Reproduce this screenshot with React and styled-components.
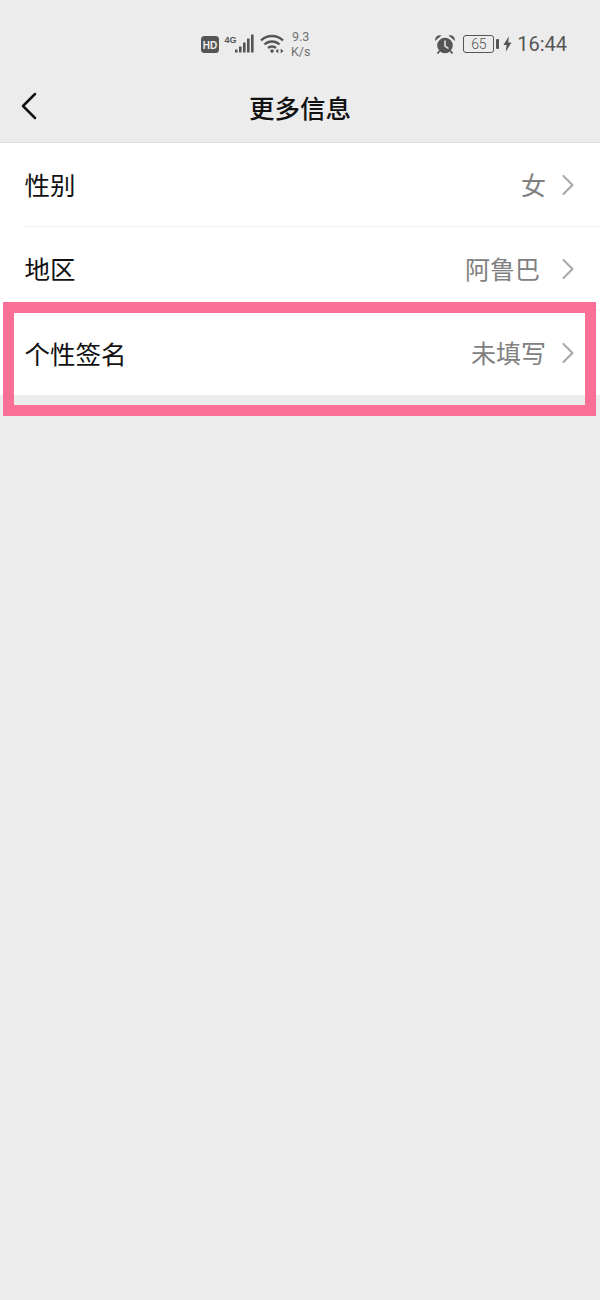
import React from "react";
import styled, { createGlobalStyle } from "styled-components";
import { ChevronLeft, ChevronRight } from "lucide-react";

const Global = createGlobalStyle`
  html, body {
    margin: 0;
    padding: 0;
    background: #ececec;
  }
  * {
    box-sizing: border-box;
  }
`
const Page = styled.div`
  position: relative;
  width: 600px;
  height: 1300px;
  background: #ececec;
  font-family: "Noto Sans CJK SC", "Liberation Sans", sans-serif;
  overflow: hidden;
`
const StatusBar = styled.div`
  display: flex;
  justify-content: space-between;
  align-items: center;
  height: 72px;
  padding: 16px 33px 0 201px;
  color: #555;
  font-family: "Roboto", "Liberation Sans", sans-serif;
`
const StatusGroup = styled.div`
  display: flex;
  align-items: center;
`
const Speed = styled.div`
  font-size: 12.5px;
  line-height: 15px;
  text-align: center;
  margin-left: 7px;
  color: #707070;
`
const BatteryBox = styled.div`
  display: flex;
  align-items: center;
  justify-content: center;
  width: 31px;
  height: 18px;
  margin-left: 8px;
  border: 1.5px solid #555;
  border-radius: 3px;
  font-size: 14px;
  font-weight: 300;
  letter-spacing: -0.4px;
`
const BatteryCap = styled.div`
  width: 3px;
  height: 10px;
  margin-left: 2px;
  background: #555;
  border-radius: 1px;
`
const Time = styled.div`
  font-size: 20px;
  font-weight: 400;
  color: #555;
  margin-left: 5px;
`
const Header = styled.div`
  position: relative;
  display: flex;
  align-items: center;
  justify-content: center;
  height: 71px;
  padding-bottom: 2px;
  border-bottom: 1px solid #e0e0e0;
`
const BackBtn = styled.div`
  position: absolute;
  left: 5px;
  top: 10px;
  display: flex;
  color: #111;
`
const Title = styled.div`
  font-size: 25.5px;
  font-weight: 500;
  color: #111;
`
const List = styled.div`
  background: #fff;
`
const Row = styled.div`
  display: flex;
  align-items: center;
  justify-content: space-between;
  height: 84px;
  margin-left: 24.5px;
  padding: 0 14px 2px 0;
  border-bottom: ${(p) => (p.$last ? "none" : "1px solid #f0f0f0")};
`
const Label = styled.div`
  font-size: 25.5px;
  color: #111;
`
const Value = styled.div`
  display: flex;
  align-items: center;
  font-size: 25px;
  color: #808080;
`
const Arrow = styled.div`
  display: flex;
  margin: 2px 0 0 ${(p) => p.$gap}px;
  color: #a8a8a8;
`
const Highlight = styled.div`
  position: absolute;
  left: 3px;
  top: 302px;
  width: 593px;
  height: 114px;
  border: 11px solid #fa6f95;
`

const rows = [
  { label: "性别", value: "女", gap: 4 },
  { label: "地区", value: "阿鲁巴", gap: 10 },
  { label: "个性签名", value: "未填写", gap: 4, last: true },
];

const HdIcon = () => (
  <svg width="18" height="17" viewBox="0 0 18 17">
    <rect width="18" height="17" rx="3.5" fill="#555" />
    <text x="9" y="12.5" textAnchor="middle" fontSize="10" fontWeight="700" fill="#eee" fontFamily="Liberation Sans">HD</text>
  </svg>
);

const SignalIcon = () => (
  <svg width="30" height="20" viewBox="0 0 30 20" style={{ marginLeft: 5 }}>
    <text x="0.500" y="8.500" fontSize="9" fontWeight="700" fill="#555" fontFamily="Liberation Sans">4G</text>
    <rect x="11" y="15.500" width="2.600" height="3" fill="#555" />
    <rect x="15" y="12.500" width="2.600" height="6" fill="#555" />
    <rect x="19" y="8.500" width="2.600" height="10" fill="#555" />
    <rect x="23" y="4.500" width="2.600" height="14" fill="#555" />
    <rect x="27" y="0.500" width="2.600" height="18" fill="#555" />
  </svg>
);

const WifiIcon = () => (
  <svg width="24" height="20" viewBox="0 0 24 20" fill="none" stroke="#555" strokeWidth="2.400" style={{ marginLeft: 6 }}>
    <path d="M1 6.500C7 0.500 17 0.500 23 6.500" />
    <path d="M4.500 10.500C8.500 6.500 15.500 6.500 19.500 10.500" />
    <path d="M8 14C10.200 12 13.800 12 16 14" />
    <circle cx="12" cy="17" r="1.800" fill="#555" stroke="none" />
    <path d="M15.500 17l2.800-2.200v4.400zM23.500 17l-2.800-2.200v4.400z" fill="#555" stroke="none" />
  </svg>
);

const AlarmIcon = () => (
  <svg width="20" height="19" viewBox="0 0 20 19" fill="#555">
    <circle cx="10" cy="10.500" r="7.800" />
    <path d="M0 6C-0.300 2.500 2.500 -0.500 6.500 0.500zM20 6C20.300 2.500 17.500 -0.500 13.500 0.500z" />
    <path d="M4.500 16l-2 2.500M15.500 16l2 2.500" stroke="#555" strokeWidth="1.800" />
    <path d="M10 5.500v5.500l3.500 2.500" stroke="#ececec" strokeWidth="1.500" fill="none" />
  </svg>
);

const BoltIcon = () => (
  <svg width="9" height="16" viewBox="0 0 10 17" fill="#555" style={{ marginLeft: 4 }}>
    <path d="M6.500 0L0.500 9.500H4L3 17L9.500 6.800H5.800z" />
  </svg>
);

const App = () => {
  return (
    <Page>
      <Global />
      <StatusBar>
        <StatusGroup>
          <HdIcon />
          <SignalIcon />
          <WifiIcon />
          <Speed>9.3<br />K/s</Speed>
        </StatusGroup>
        <StatusGroup>
          <AlarmIcon />
          <BatteryBox>65</BatteryBox>
          <BatteryCap />
          <BoltIcon />
          <Time>16:44</Time>
        </StatusGroup>
      </StatusBar>
      <Header>
        <BackBtn><ChevronLeft size={48} strokeWidth={1.25} /></BackBtn>
        <Title>更多信息</Title>
      </Header>
      <List>
        {rows.map((r) => (
          <Row key={r.label} $last={r.last}>
            <Label>{r.label}</Label>
            <Value>
              {r.value}
              <Arrow $gap={r.gap}><ChevronRight size={36} strokeWidth={1.4} /></Arrow>
            </Value>
          </Row>
        ))}
      </List>
      <Highlight />
    </Page>
  );
};

export default App;
